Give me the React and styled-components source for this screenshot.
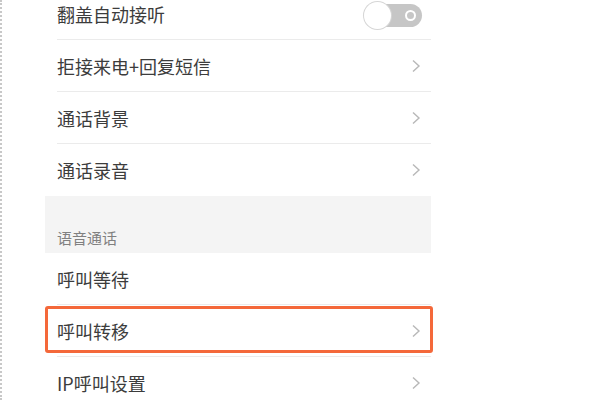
import styled, { createGlobalStyle } from 'styled-components';

const GlobalStyle = createGlobalStyle`
	html, body {
		margin: 0;
		padding: 0;
		background: #ffffff;
		overflow: hidden;
	}
	body {
		font-family: "Noto Sans CJK SC", "Noto Sans", sans-serif;
	}
`;

const Page = styled.div`
	width: 600px;
	height: 400px;
	display: flex;
	overflow: hidden;
	border-left: 2px dotted #c8c8c8;
	box-sizing: border-box;
`;

const Panel = styled.div`
	width: 386px;
	margin-left: 43px;
	margin-top: -12px;
	display: flex;
	flex-direction: column;
`;

const Row = styled.div`
	position: relative;
	height: 52px;
	flex-shrink: 0;
	display: flex;
	align-items: center;
	justify-content: space-between;
	padding: 0 10px 0 12px;
	box-sizing: border-box;
	font-size: 18px;
	color: #3c3c3c;

	/* bottom hairline, indented to the text */
	&::after {
		content: '';
		position: absolute;
		left: 12px;
		right: 0;
		bottom: 0;
		height: 1px;
		background: ${(props) => (props.$last ? 'transparent' : '#ebebeb')};
	}
`;

const Highlight = styled.div`
	position: absolute;
	left: 0;
	right: -2px;
	top: 1px;
	bottom: 4px;
	border: 3px solid #f4683a;
	border-radius: 3px;
	pointer-events: none;
`;

const Section = styled.div`
	height: 57px;
	flex-shrink: 0;
	background: #f4f4f4;
	display: flex;
	align-items: flex-end;
	padding: 0 0 5px 12px;
	box-sizing: border-box;
	font-size: 15px;
	color: #808080;
`;

const Toggle = styled.div`
	position: relative;
	width: 58px;
	height: 23px;
	border-radius: 12px;
	background: #c6c6c6;
	margin-right: -1px;
	margin-top: 3px;
`;

const Knob = styled.div`
	position: absolute;
	left: 0;
	top: -2px;
	width: 27px;
	height: 27px;
	border-radius: 50%;
	background: #ffffff;
	box-shadow: 0 0 0 1px #d6d6d6;
`;

const Ring = styled.div`
	position: absolute;
	right: 6px;
	top: 6px;
	width: 7px;
	height: 7px;
	border-radius: 50%;
	border: 2px solid #ffffff;
`;

function Chevron() {
	return (
		<svg width="10" height="14" viewBox="0 0 10 14">
			<path d="M2 1.5 L8 7 L2 12.5" fill="none" stroke="#b8b8b8" strokeWidth="1.4" />
		</svg>
	);
}

const items = [
	{ label: '拒接来电+回复短信' },
	{ label: '通话背景' },
	{ label: '通话录音', last: true },
];

function App() {
	return (
		<>
			<GlobalStyle />
			<Page>
				<Panel>
					<Row>
						<span>翻盖自动接听</span>
						<Toggle>
							<Knob />
							<Ring />
						</Toggle>
					</Row>
					{items.map((item) => (
						<Row key={item.label} $last={item.last}>
							<span>{item.label}</span>
							<Chevron />
						</Row>
					))}
					<Section>语音通话</Section>
					<Row>
						<span>呼叫等待</span>
					</Row>
					<Row>
						<span>呼叫转移</span>
						<Chevron />
						<Highlight />
					</Row>
					<Row>
						<span>IP呼叫设置</span>
						<Chevron />
					</Row>
				</Panel>
			</Page>
		</>
	);
}

export default App;
